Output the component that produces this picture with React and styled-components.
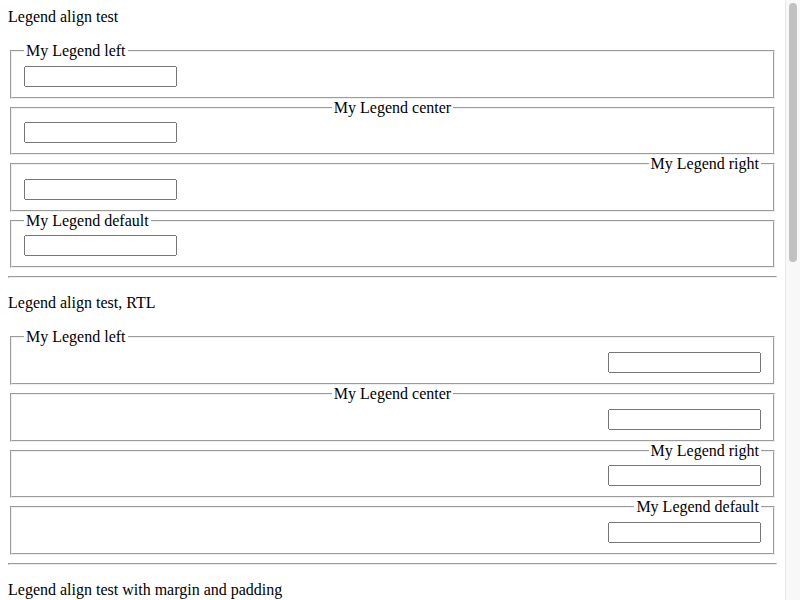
import React from 'react';
import styled, { createGlobalStyle } from 'styled-components';

const GlobalStyle = createGlobalStyle`
    body {
        margin: 8px 23px 8px 8px; /* 15px kept free for the scrollbar */
        font-family: "Liberation Serif", "Times New Roman", serif;
        font-size: 16px;
        color: #000;
        background: #fff;
    }
`;

// drawn scrollbar, the headless shot hides the real one
const ScrollTrack = styled.div`
    position: fixed;
    top: 0;
    right: 0;
    width: 15px;
    height: 100vh;
    box-sizing: border-box;
    background: #f8f8f8;
    border-left: 1px solid #e8e8e8;
`;

const ScrollThumb = styled.div`
    margin: 3px 3px 0 3px;
    height: 259px;
    border-radius: 4px;
    background: #c1c1c1;
`;

const Caption = styled.p`
    margin: 16px 0;
    &:first-of-type {
        margin-top: 0;
    }
`;

const Rule = styled.hr`
    margin: 8px 0;
`;

const Box = styled.fieldset`
    margin: 0 2px;
`;

const side = (p, which) => {
    const inset = p.$spaced ? '20px' : '0';
    if (p.$align === 'center') return 'auto';
    if (p.$align === 'right') return which === 'left' ? 'auto' : inset;
    if (p.$align === 'left') return which === 'right' ? 'auto' : inset;
    return inset;
};

const Legend = styled.legend`
    margin-left: ${p => side(p, 'left')};
    margin-right: ${p => side(p, 'right')};
    margin-bottom: ${p => (p.$spaced ? '10px' : '0')};
    padding: ${p => (p.$spaced ? '11px 10px' : '0 2px')};
`;

const Field = styled.input`
    width: 145px;
    font-family: Arial, "Liberation Sans", sans-serif;
`;

const aligns = ['left', 'center', 'right', 'default'];

const Group = ({ rtl, spaced }) => (
    <>
        {aligns.map(a => (
            <Box key={a} dir={rtl ? 'rtl' : undefined}>
                <Legend $align={a === 'default' ? null : a} $spaced={spaced}>My Legend {a}</Legend>
                <Field type="text" />
            </Box>
        ))}
    </>
);

const App = () => {
    return (
        <>
            <GlobalStyle />
            <Caption>Legend align test</Caption>
            <Group />
            <Rule />
            <Caption>Legend align test, RTL</Caption>
            <Group rtl />
            <Rule />
            <Caption>Legend align test with margin and padding</Caption>
            <Group spaced />
            <Rule />
            <Caption>Legend align test with margin and padding, RTL</Caption>
            <Group rtl spaced />
            <ScrollTrack>
                <ScrollThumb />
            </ScrollTrack>
        </>
    );
};

export default App;
